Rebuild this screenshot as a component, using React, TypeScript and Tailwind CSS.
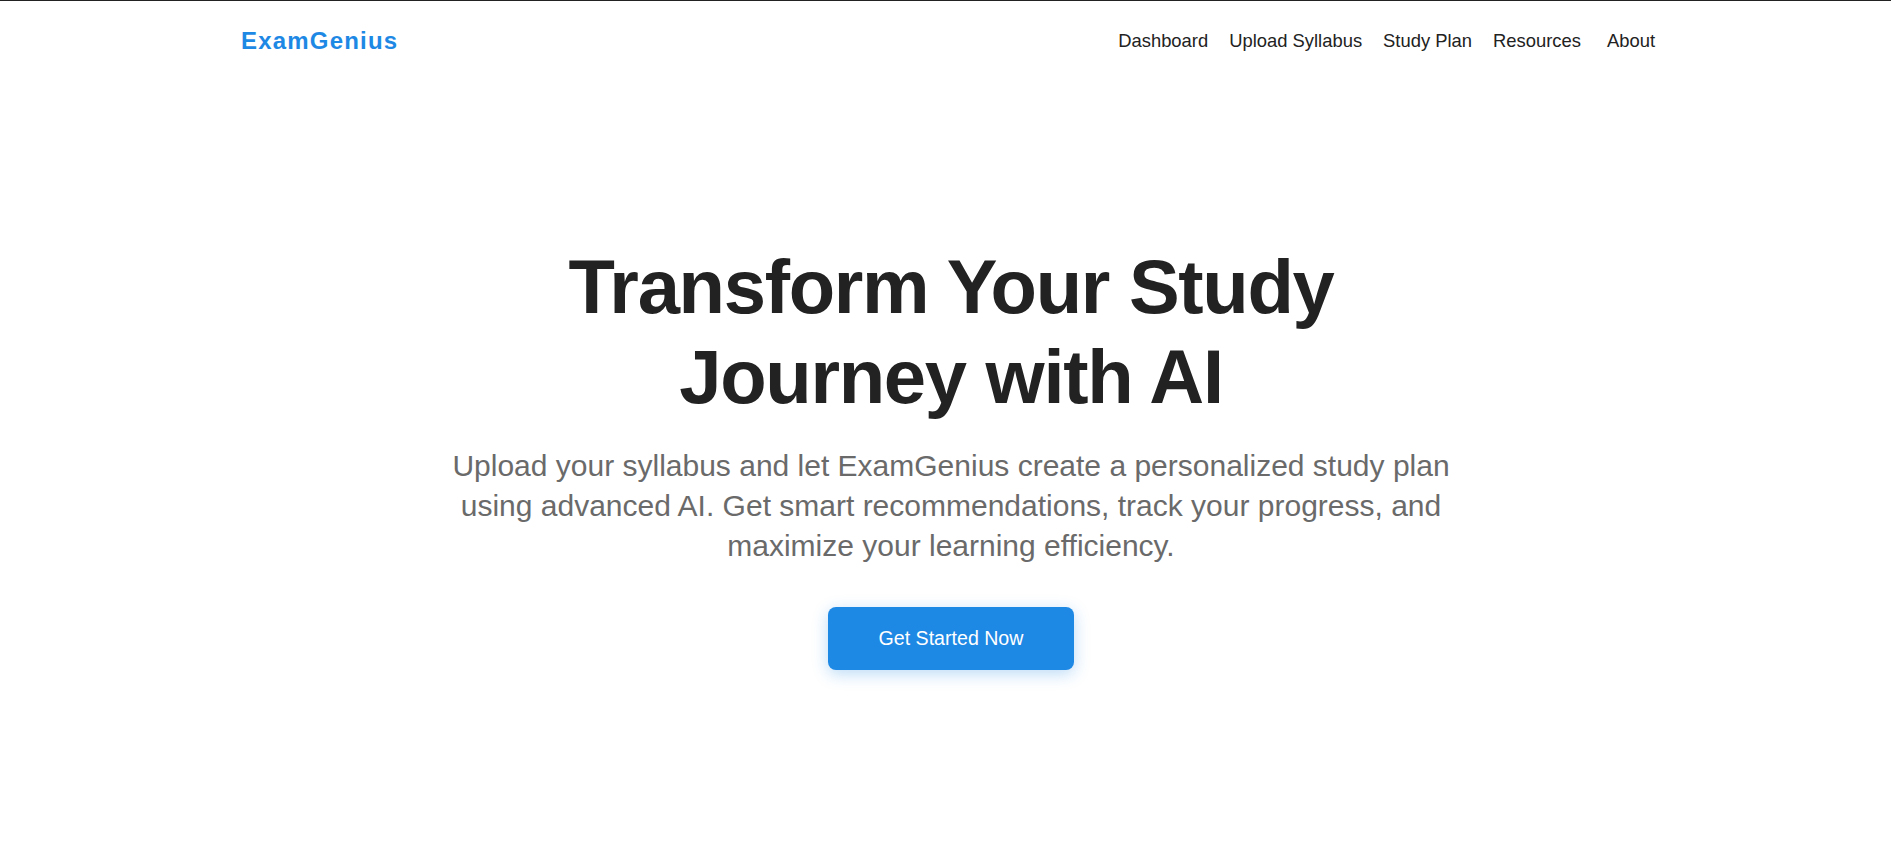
import React from "react";

export default function App() {
  const links = ["Dashboard", "Upload Syllabus", "Study Plan", "Resources"];
  return (
    <div className="min-h-screen bg-white border-t border-[#222222] pl-[11px] font-['Liberation_Sans',Arial,sans-serif]">
      <header className="h-[80px]">
        <div className="mx-auto flex h-full w-[1420px] items-center justify-between">
          <a className="text-[24px] font-bold leading-[30px] tracking-[1.2px] text-[#1e88e5]">ExamGenius</a>
          <nav className="mr-[6px] flex items-center gap-[21px] pb-[2px] text-[18.4px] leading-[27px] text-[#222222]">
            {links.map((l) => (
              <a key={l}>{l}</a>
            ))}
            <a className="ml-[5px]">About</a>
          </nav>
        </div>
      </header>
      <main className="flex flex-col items-center pt-[161px] text-center">
        <h1 className="w-[900px] text-[76px] font-bold leading-[90px] tracking-[-1.3px] text-[#222222]">
          Transform Your Study Journey with AI
        </h1>
        <p className="mt-[24px] w-[1020px] text-[30px] leading-[40px] text-[#6a6a6a]">
          Upload your syllabus and let ExamGenius create a personalized study plan using advanced AI. Get smart
          recommendations, track your progress, and maximize your learning efficiency.
        </p>
        <button className="mt-[41px] flex h-[63px] w-[246px] items-center justify-center rounded-[8px] bg-[#1e88e5] text-[19.6px] text-white shadow-[0_4px_16px_rgba(30,136,229,0.3)]">
          Get Started Now
        </button>
      </main>
    </div>
  );
}
